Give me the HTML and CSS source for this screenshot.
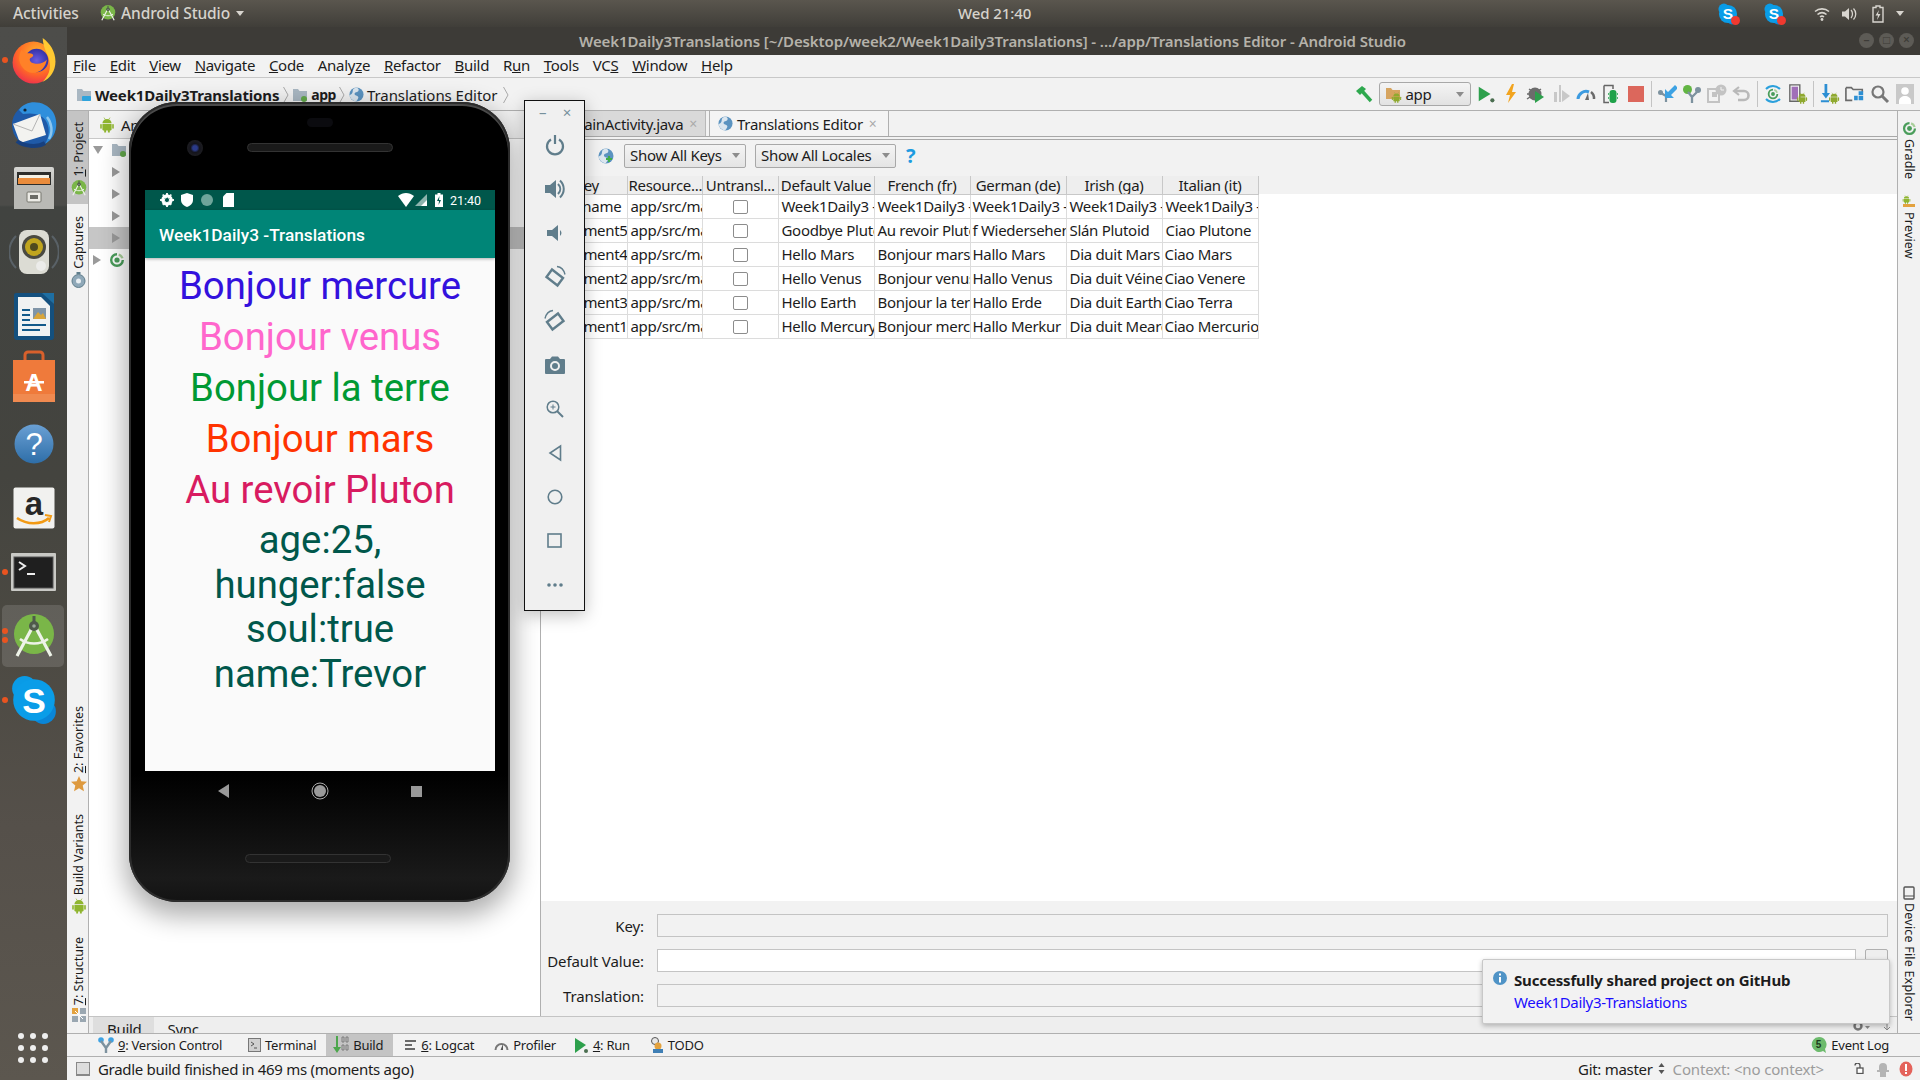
FILE: index.html
```html
<!DOCTYPE html>
<html lang="en">
<head>
<meta charset="utf-8">
<title>Android Studio</title>
<link rel="stylesheet" href="styles.css">
</head>
<body>
<svg class="defs" width="0" height="0" aria-hidden="true">
  <defs>
    <symbol id="droid" viewBox="0 0 16 16">
      <path d="M3.4 6.3a4.6 4.3 0 0 1 9.2 0z"/>
      <path d="M3.4 7h9.2v5.6a.8.8 0 0 1-.8.8h-1v2.2H8.9v-2.2H7.1v2.2H5.2v-2.2h-1a.8.8 0 0 1-.8-.8z"/>
      <rect x="1.2" y="7" width="1.6" height="4.8" rx=".8"/>
      <rect x="13.2" y="7" width="1.6" height="4.8" rx=".8"/>
      <path d="M5 .6l1.3 2M11 .6L9.7 2.6" stroke="currentColor" stroke-width=".7"/>
    </symbol>
    <symbol id="skype" viewBox="0 0 44 48">
      <circle cx="13" cy="13" r="12" fill="#0a9be6"/>
      <circle cx="31" cy="35" r="12" fill="#0a86d8"/>
      <circle cx="22" cy="24" r="20" fill="#0a9de8"/>
      <text x="22" y="36" text-anchor="middle" font-family="Liberation Sans" font-weight="700" font-size="34" fill="#fff">S</text>
    </symbol>
    <symbol id="globe" viewBox="0 0 16 16">
      <circle cx="8" cy="8" r="7.5" fill="#5b93c0"/>
      <path d="M8 .6c2 1 3 2 2 3.6S6.500 5 6 7s2 2 3.500 3-1 4.500-2 5.300C4 15 1 12 .6 8.500 3 8 4 6 4 4s2-3 4-3.400z" fill="#dbe6ef"/>
    </symbol>
    <symbol id="gradle" viewBox="0 0 16 16">
      <path d="M8 1a7 7 0 1 0 7 7h-2.400A4.600 4.600 0 1 1 8 3.400z" fill="#4a9d5b"/>
      <circle cx="8" cy="8" r="2.600" fill="#4a9d5b"/>
      <path d="M10 1.400a7 7 0 0 1 4.600 4.600l-2.300.6a4.600 4.600 0 0 0-2.900-2.900z" fill="#a8cf9a"/>
    </symbol>
    <symbol id="chev" viewBox="0 0 8 18">
      <path d="M1.500 1L6 9l-4.500 8" fill="none" stroke="#aaa" stroke-width="1"/>
    </symbol>
    <symbol id="asicon" viewBox="0 0 44 44">
      <circle cx="22" cy="20" r="20" fill="#7ab648"/>
      <path d="M5 42L20 14M39 42L24 14" stroke="#eef3e8" stroke-width="3.200" fill="none"/>
      <path d="M8 25c8 6 20 6 28 0" stroke="#eef3e8" stroke-width="2.600" fill="none"/>
      <circle cx="22" cy="12" r="5" fill="#4f5a4b"/>
      <rect x="20.500" y="2" width="3" height="6" fill="#4f5a4b"/>
      <circle cx="22" cy="12" r="1.800" fill="#9aa89a"/>
    </symbol>
  </defs>
</svg>

<header class="topbar">
  <div class="tb-left">
    <span class="tb-activities">Activities</span>
    <svg class="tb-as" width="16" height="18"><use href="#asicon"/></svg>
    <span>Android Studio</span>
    <i class="caret caret-light"></i>
  </div>
  <div class="tb-clock">Wed 21:40</div>
  <div class="tb-right">
    <span class="tray-skype"><svg width="20" height="22"><use href="#skype"/></svg><i class="tray-dot"></i></span>
    <span class="tray-skype tray-skype-2"><svg width="20" height="22"><use href="#skype"/></svg><i class="tray-dot"></i></span>
    <svg class="tray-wifi" width="16" height="16" viewBox="0 0 16 16" fill="none" stroke="#d8d5cf" stroke-width="1.600"><path d="M1 5.500c4-3.500 10-3.500 14 0M3.500 8.500c2.700-2.300 6.300-2.300 9 0M6 11c1.200-1 2.800-1 4 0"/><circle cx="8" cy="13.500" r="1.400" fill="#d8d5cf" stroke="none"/></svg>
    <svg class="tray-vol" width="16" height="16" viewBox="0 0 16 16"><path d="M1 5.500h3L8 2v12l-4-3.500H1z" fill="#d8d5cf"/><path d="M10 4c2 2 2 6 0 8M12.500 2.500c3 3 3 8 0 11" stroke="#d8d5cf" stroke-width="1.300" fill="none"/></svg>
    <svg class="tray-bat" width="12" height="18" viewBox="0 0 12 18"><path d="M4 1h4v1.500h3V17H1V2.500h3z" fill="none" stroke="#d8d5cf" stroke-width="1.400"/><path d="M7 5L3.500 10.500H6L5 15l3.500-6H6z" fill="#d8d5cf"/></svg>
    <i class="caret caret-light tray-caret"></i>
  </div>
</header>

<div class="desk">
  <nav class="dock">
    <div class="dock-item"><i class="dock-dot"></i>
      <svg width="45" height="47" viewBox="0 0 44 46">
        <defs>
          <radialGradient id="ff1" cx=".6" cy=".3" r=".85"><stop offset="0" stop-color="#ffb62e"/><stop offset=".55" stop-color="#ff6a25"/><stop offset="1" stop-color="#e8195e"/></radialGradient>
          <radialGradient id="ff2" cx=".5" cy=".5" r=".6"><stop offset="0" stop-color="#6a5be0"/><stop offset="1" stop-color="#2a2a9c"/></radialGradient>
        </defs>
        <circle cx="22" cy="25" r="20.500" fill="url(#ff1)"/>
        <path d="M31 1c7 5 12.500 13 12.500 23 0 9-5 17-13 20 6-5 9-13 7-21-1-6-6-11-6.500-22z" fill="#ffc932"/>
        <circle cx="25" cy="23" r="11.500" fill="url(#ff2)"/>
        <path d="M10 13c3 1 4 3 8 3 4 0 5 3 2 4-3 1-2 5 3 6 5 1 10-1 12-4-1 8-7 14-15 13-7-1-12-8-12-14 0-3 1-6 2-8z" fill="#ff8128"/>
      </svg>
    </div>
    <div class="dock-item">
      <svg width="48" height="50" viewBox="0 0 48 50">
        <circle cx="24" cy="26" r="22" fill="#1f5aa8"/>
        <path d="M9 11C16 0 35 1 43 13c6 10 4 25-8 32 4-6 5-14 2-21C34 16 24 13 13 15z" fill="#2f8fdc"/>
        <path d="M37 18c5 6 6 15 2 22" stroke="#8cc6ee" stroke-width="2.500" fill="none"/>
        <path d="M3 25l27-10 6 21-26 8z" fill="#f3f3f0"/>
        <path d="M3 25l19 7 8-17" fill="none" stroke="#b4b4b4" stroke-width="1"/>
        <circle cx="15" cy="11" r="1.600" fill="#123"/>
        <path d="M7 42c6 5 20 7 28 2" stroke="#17407f" stroke-width="4" fill="none"/>
      </svg>
    </div>
    <div class="dock-item">
      <svg width="42" height="44" viewBox="0 0 42 44">
        <defs><linearGradient id="cab" x1="0" y1="0" x2="0" y2="1"><stop offset="0" stop-color="#d7d7d4"/><stop offset="1" stop-color="#9c9c98"/></linearGradient></defs>
        <rect x="1" y="1" width="40" height="42" rx="2" fill="url(#cab)"/>
        <rect x="4" y="6" width="34" height="13" fill="#2d2d2b"/>
        <rect x="6" y="9" width="30" height="3" fill="#f4f0e4"/>
        <rect x="5" y="12" width="32" height="6" fill="#ea8c3c"/>
        <rect x="1" y="19" width="40" height="24" fill="#b9b9b5"/>
        <rect x="14" y="26" width="14" height="10" rx="1" fill="#ecebe6" stroke="#77776f"/>
        <rect x="17" y="29" width="8" height="4" fill="#6b6b66"/>
      </svg>
    </div>
    <div class="dock-item">
      <svg width="50" height="44" viewBox="0 0 50 44">
        <path d="M7 6c-9 9-9 23 0 32M43 6c9 9 9 23 0 32" stroke="#6d7a87" stroke-width="2" fill="none" opacity=".55"/>
        <rect x="10" y="0" width="30" height="44" rx="8" fill="#dcdcd4"/>
        <circle cx="25" cy="17" r="12" fill="#4a4a42"/>
        <circle cx="25" cy="17" r="9" fill="#c0a51e"/>
        <circle cx="25" cy="17" r="4" fill="#4f4a1e"/>
        <circle cx="32" cy="36" r="5" fill="#ececea"/>
      </svg>
    </div>
    <div class="dock-item">
      <svg width="40" height="47" viewBox="0 0 40 47">
        <path d="M2 0h27l11 11v33a3 3 0 0 1-3 3H3a3 3 0 0 1-3-3V2a2 2 0 0 1 2-2z" fill="#14507e"/>
        <path d="M28 0h12v11z" fill="#1e6fa3"/>
        <path d="M4 4h23l9 9v30H4z" fill="#f0f2f2"/>
        <path d="M8 16h8v2H8zM8 21h8v2H8zM8 26h8v2H8zM8 31h24v2H8zM8 36h18v2H8z" fill="#135a8a"/>
        <rect x="19" y="15" width="13" height="11" fill="#7f95a8"/>
        <path d="M19 26l5-7 3 3 2-2 3 6z" fill="#d9a63a"/>
      </svg>
    </div>
    <div class="dock-item dock-store">
      <svg width="42" height="52" viewBox="0 0 42 52">
        <path d="M12 11V5a3 3 0 0 1 3-3h12a3 3 0 0 1 3 3v6" fill="none" stroke="#d8602c" stroke-width="3"/>
        <path d="M0 10h42v42H0z" fill="#ef7a3b"/>
        <rect y="44" width="42" height="8" fill="#f08a50"/>
        <text x="21" y="41" text-anchor="middle" font-family="Liberation Sans" font-weight="700" font-size="24" fill="#fff">A</text>
        <rect x="11" y="31" width="20" height="2.500" fill="#fff"/>
      </svg>
    </div>
    <div class="dock-item">
      <svg width="40" height="40" viewBox="0 0 40 40">
        <defs><linearGradient id="hlp" x1="0" y1="0" x2="0" y2="1"><stop offset="0" stop-color="#6aa0d4"/><stop offset="1" stop-color="#2e6ea8"/></linearGradient></defs>
        <circle cx="20" cy="20" r="19.500" fill="url(#hlp)"/>
        <text x="20" y="31" text-anchor="middle" font-family="Liberation Sans" font-size="31" fill="#fff">?</text>
      </svg>
    </div>
    <div class="dock-item">
      <svg width="42" height="42" viewBox="0 0 42 42">
        <rect x=".5" y=".5" width="41" height="41" rx="2" fill="#f1f1ef"/>
        <text x="21" y="28" text-anchor="middle" font-family="Liberation Sans" font-weight="700" font-size="33" fill="#272727">a</text>
        <path d="M4 31c10 7 24 7 32 0" stroke="#f29a14" stroke-width="2.600" fill="none"/>
        <path d="M32 28l6 1-2 6" fill="none" stroke="#f29a14" stroke-width="2"/>
      </svg>
    </div>
    <div class="dock-item"><i class="dock-dot"></i>
      <svg width="45" height="38" viewBox="0 0 45 38">
        <rect width="45" height="38" rx="1" fill="#c9c9c5"/>
        <rect x="3" y="4" width="39" height="31" fill="#1f1f1f" stroke="#555"/>
        <path d="M8 9l6 4-6 4" fill="none" stroke="#eee" stroke-width="2"/>
        <rect x="16" y="20" width="8" height="2" fill="#eee"/>
      </svg>
    </div>
    <div class="dock-item dock-active"><i class="dock-dot dock-dot-a"></i><i class="dock-dot dock-dot-b"></i>
      <svg width="44" height="44"><use href="#asicon"/></svg>
    </div>
    <div class="dock-item"><i class="dock-dot"></i>
      <svg width="46" height="50"><use href="#skype"/></svg>
    </div>
    <div class="dock-apps">
      <i></i><i></i><i></i><i></i><i></i><i></i><i></i><i></i><i></i>
    </div>
  </nav>

  <main class="win">
    <div class="title">
      <span class="title-text">Week1Daily3Translations [~/Desktop/week2/Week1Daily3Translations] - .../app/Translations Editor - Android Studio</span>
      <div class="title-btns"><i>–</i><i>□</i><i>×</i></div>
    </div>

    <div class="menu">
      <span><u>F</u>ile</span><span><u>E</u>dit</span><span><u>V</u>iew</span><span><u>N</u>avigate</span><span><u>C</u>ode</span><span>Analy<u>z</u>e</span><span><u>R</u>efactor</span><span><u>B</u>uild</span><span>R<u>u</u>n</span><span><u>T</u>ools</span><span>VC<u>S</u></span><span><u>W</u>indow</span><span><u>H</u>elp</span>
    </div>

    <div class="navbar">
      <div class="crumbs">
        <svg class="c-ico" width="16" height="16" viewBox="0 0 16 16"><path d="M1 2h5l1.500 2H15v10H1z" fill="#a9b7c2"/><rect x="6" y="9" width="9" height="5" rx="1" fill="#2fa3dc"/></svg>
        <b>Week1Daily3Translations</b>
        <svg class="c-chev c-chev-1" width="8" height="18"><use href="#chev"/></svg>
        <svg class="c-ico" width="16" height="16" viewBox="0 0 16 16"><path d="M1 2h5l1.500 2H15v10H1z" fill="#a9b7c2"/><circle cx="12" cy="12" r="3" fill="#62a84a"/></svg>
        <b class="c-app">app</b>
        <svg class="c-chev c-chev-2" width="8" height="18"><use href="#chev"/></svg>
        <svg class="c-ico" width="15" height="15"><use href="#globe"/></svg>
        <span class="c-te">Translations Editor</span>
        <svg class="c-chev" width="8" height="18"><use href="#chev"/></svg>
      </div>
      <div class="tools">
        <svg class="t" width="20" height="20" viewBox="0 0 20 20"><path d="M8 7l9 10" stroke="#2ea84e" stroke-width="3.400"/><path d="M2 7l6-5 4 3-6 6z" fill="#2ea84e"/></svg>
        <div class="runcombo">
          <svg width="18" height="18" viewBox="0 0 18 18"><path d="M1 3h5l1.500 2H15v9H1z" fill="#d6a45f"/><g color="#8fa92e" fill="#8fa92e"><use href="#droid" x="6" y="7" width="11" height="11"/></g></svg>
          <span>app</span><i class="caret caret-dark"></i>
        </div>
        <svg class="t t-run" width="22" height="20" viewBox="0 0 22 20"><path d="M3 2l13 8-13 8z" fill="#2da04c"/><circle cx="18" cy="17" r="2.300" fill="#4b6e50"/></svg>
        <svg class="t" width="20" height="20" viewBox="0 0 20 20"><path d="M11 0L5 11h4l-2 8 8-11h-4l2-8z" fill="#f2a41f"/></svg>
        <svg class="t" width="20" height="20" viewBox="0 0 20 20"><path d="M3 5l3 2M15 5l-3 2M1 10h3M1 15l3-2" stroke="#6c6c6c" stroke-width="1.500"/><circle cx="9" cy="10" r="6.500" fill="#6c6c6c"/><path d="M9 7l9 6-9 6z" fill="#2da04c"/></svg>
        <svg class="t" width="20" height="20" viewBox="0 0 20 20"><path d="M3 8h3v10H3zM8 1h2v17H8z" fill="#c8c8c8"/><path d="M11 6l8 6-8 6z" fill="#c8c8c8"/></svg>
        <svg class="t" width="20" height="20" viewBox="0 0 20 20"><path d="M2 15a8 8 0 0 1 11-7" stroke="#3d9be0" stroke-width="3" fill="none"/><path d="M15 8a8 8 0 0 1 3 7" stroke="#6a6a6a" stroke-width="2.500" fill="none"/><path d="M9 16l3-7 1 7z" fill="#6a6a6a"/></svg>
        <svg class="t" width="20" height="20" viewBox="0 0 20 20"><path d="M3 1.500h9V5M8 18.500H3v-17" fill="none" stroke="#666" stroke-width="1.500"/><path d="M7 10h1M7 14h1M16 10h1M16 14h1" stroke="#1fa24a" stroke-width="1.300"/><rect x="8.500" y="6" width="7" height="13" rx="3" fill="#1fa24a"/></svg>
        <svg class="t" width="20" height="20" viewBox="0 0 20 20"><rect x="2" y="2" width="16" height="16" fill="#dc675c"/></svg>
        <i class="t-sep"></i>
        <svg class="t" width="20" height="20" viewBox="0 0 20 20"><circle cx="3.500" cy="8.500" r="2.500" fill="#7d929f"/><path d="M4 9l5 3v6" stroke="#7d929f" stroke-width="2.200" fill="none"/><path d="M18 1L11 8l-3-3v9h9l-3-3 7-7z" fill="#3da2e3"/></svg>
        <svg class="t" width="20" height="20" viewBox="0 0 20 20"><circle cx="5.500" cy="5.500" r="4.500" fill="#62b543"/><circle cx="16" cy="6" r="3" fill="#7d929f"/><path d="M6 8l4 5v6M15 8l-5 5" stroke="#7d929f" stroke-width="2.300" fill="none"/></svg>
        <svg class="t" width="20" height="20" viewBox="0 0 20 20"><path d="M1 5h11v13H1z" fill="none" stroke="#c3c3c3" stroke-width="2"/><rect x="5" y="8" width="5" height="5" fill="#c3c3c3"/><circle cx="14" cy="6" r="5.500" fill="#c3c3c3"/><path d="M14 3v3h3" stroke="#f2f2f2" fill="none"/></svg>
        <svg class="t" width="20" height="20" viewBox="0 0 20 20"><path d="M7 3L2 7l5 4" fill="none" stroke="#b9b9b9" stroke-width="2.200"/><path d="M3 7h9a4.500 4.500 0 0 1 0 9H6" fill="none" stroke="#b9b9b9" stroke-width="2.600"/></svg>
        <i class="t-sep"></i>
        <svg class="t" width="20" height="20" viewBox="0 0 20 20"><path d="M3 5c4-4 10-4 14 0M3 15c4 4 10 4 14 0" stroke="#2ba0dc" stroke-width="2" fill="none"/><use href="#gradle" x="4" y="4" width="12" height="12"/></svg>
        <svg class="t" width="22" height="22" viewBox="0 0 22 22"><path d="M2 1h11v18H2z" fill="none" stroke="#666" stroke-width="1.500"/><rect x="4" y="3" width="7" height="14" fill="#a06fb8"/><g fill="#8fa92e" color="#8fa92e"><use href="#droid" x="9" y="9" width="13" height="13"/></g></svg>
        <i class="t-sep"></i>
        <svg class="t" width="22" height="22" viewBox="0 0 22 22"><path d="M5 0h3v10h3l-4.500 6L2 10h3zM1 18h9v2H1z" fill="#2d8fd3"/><g fill="#8fa92e" color="#8fa92e"><use href="#droid" x="9" y="9" width="13" height="13"/></g></svg>
        <svg class="t" width="22" height="20" viewBox="0 0 22 20"><path d="M1 3h6l2 2h10v3M8 17H1V3" fill="none" stroke="#6a6a6a" stroke-width="1.800"/><path d="M15 7h5v4h-5zM10 12h4v5h-4zM15 12h5v5h-5z" fill="#2d8fd3"/></svg>
        <svg class="t" width="20" height="20" viewBox="0 0 20 20"><circle cx="8" cy="8" r="5.500" fill="none" stroke="#777" stroke-width="2.200"/><path d="M12 12l6 6" stroke="#777" stroke-width="3"/></svg>
        <svg class="t" width="18" height="20" viewBox="0 0 18 20"><rect width="18" height="20" fill="#c9c9c9"/><circle cx="9" cy="7" r="3.800" fill="#fff"/><path d="M3 20v-3c0-3 3-5 6-5s6 2 6 5v3z" fill="#fff"/></svg>
      </div>
    </div>

    <div class="mid">
      <aside class="lstrip">
        <div class="sb sb-active sb-project"><span class="vt"><u>1</u>: Project</span><svg width="16" height="16"><use href="#asicon"/></svg></div>
        <div class="sb sb-captures"><span class="vt">Captures</span>
          <svg width="15" height="16" viewBox="0 0 15 16"><circle cx="7.500" cy="9" r="6.500" fill="#8fa8b8" stroke="#5f7d8b"/><circle cx="7.500" cy="9" r="2.500" fill="#e8eef2"/><rect x="5.500" y="0" width="4" height="2" fill="#5f7d8b"/></svg></div>
        <div class="sb sb-fav"><span class="vt"><u>2</u>: Favorites</span>
          <svg width="16" height="16" viewBox="0 0 16 16"><path d="M8 0l2.300 5.300 5.700.5-4.300 3.800 1.300 5.600L8 12.300l-5 2.900 1.300-5.600L0 5.800l5.700-.5z" fill="#de9a3f"/></svg></div>
        <div class="sb sb-variants"><span class="vt">Build Variants</span><svg class="sb-droid" width="16" height="16" fill="#8fb52f" color="#8fb52f"><use href="#droid"/></svg></div>
        <div class="sb sb-struct"><span class="vt"><u>7</u>: Structure</span>
          <svg width="14" height="14" viewBox="0 0 14 14"><rect width="6" height="6" fill="#e3a23f"/><rect x="8" width="6" height="6" fill="#9aa7b1"/><rect y="8" width="6" height="6" fill="#9aa7b1"/><rect x="8" y="8" width="6" height="6" fill="#9aa7b1"/><path d="M3 3l8 8" stroke="#fff"/></svg></div>
      </aside>

      <div class="work">
        <div class="panes">
          <section class="project">
            <div class="proj-head">
              <svg width="16" height="16" fill="#8fb52f" color="#8fb52f"><use href="#droid"/></svg>
              <span>Android</span>
              <i class="caret caret-dark proj-caret"></i>
              <i class="proj-split"></i>
            </div>
            <div class="tree">
              <div class="row r0"><i class="arrow-down"></i><svg width="16" height="16" viewBox="0 0 16 16"><path d="M1 2h5l1.500 2H15v10H1z" fill="#a9b7c2"/><circle cx="12" cy="12" r="3" fill="#62a84a"/></svg></div>
              <div class="row r1"><i class="arrow-right"></i></div>
              <div class="row r1"><i class="arrow-right"></i></div>
              <div class="row r1"><i class="arrow-right"></i></div>
              <div class="row r1 row-sel"><i class="arrow-right"></i></div>
              <div class="row r0"><i class="arrow-right"></i><svg width="16" height="16"><use href="#gradle"/></svg></div>
            </div>
          </section>

          <section class="editor">
            <div class="tabs">
              <div class="tab"><span>MainActivity.java</span><em>×</em></div>
              <div class="tab tab-on"><svg width="15" height="15"><use href="#globe"/></svg><span>Translations Editor</span><em>×</em></div>
            </div>
            <div class="te-bar">
              <svg class="te-globe" width="16" height="16" viewBox="0 0 16 16"><use href="#globe"/><path d="M11 8v6M8 11h6" stroke="#3fae49" stroke-width="2"/></svg>
              <div class="combo combo-keys"><span>Show All Keys</span><i class="caret caret-dark"></i></div>
              <div class="combo combo-locales"><span>Show All Locales</span><i class="caret caret-dark"></i></div>
              <span class="te-help">?</span>
            </div>
            <div class="te-table">
              <table>
                <colgroup><col class="c-key"><col class="c-res"><col class="c-res"><col class="c-val"><col class="c-val"><col class="c-val"><col class="c-val"><col class="c-val"></colgroup>
                <thead><tr><th>Key</th><th>Resource...</th><th>Untransl...</th><th>Default Value</th><th>French (fr)</th><th>German (de)</th><th>Irish (ga)</th><th>Italian (it)</th></tr></thead>
                <tbody>
                  <tr><td class="k">app_name</td><td>app/src/main</td><td><i class="check"></i></td><td>Week1Daily3 -Translations</td><td>Week1Daily3 -Translations</td><td class="tight">Week1Daily3 -Translations</td><td>Week1Daily3 -Translations</td><td>Week1Daily3 -Translations</td></tr>
                  <tr><td class="k">statement5</td><td>app/src/main</td><td><i class="check"></i></td><td>Goodbye Pluto</td><td>Au revoir Pluton</td><td class="tight">f Wiedersehen</td><td>Slán Plutoid</td><td>Ciao Plutone</td></tr>
                  <tr><td class="k">statement4</td><td>app/src/main</td><td><i class="check"></i></td><td>Hello Mars</td><td>Bonjour mars</td><td class="tight">Hallo Mars</td><td>Dia duit Mars</td><td class="tight">Ciao Mars</td></tr>
                  <tr><td class="k">statement2</td><td>app/src/main</td><td><i class="check"></i></td><td>Hello Venus</td><td>Bonjour venus</td><td class="tight">Hallo Venus</td><td>Dia duit Véineas</td><td class="tight">Ciao Venere</td></tr>
                  <tr><td class="k">statement3</td><td>app/src/main</td><td><i class="check"></i></td><td>Hello Earth</td><td>Bonjour la terre</td><td class="tight">Hallo Erde</td><td>Dia duit Earth</td><td class="tight">Ciao Terra</td></tr>
                  <tr><td class="k">statement1</td><td>app/src/main</td><td><i class="check"></i></td><td>Hello Mercury</td><td>Bonjour mercure</td><td class="tight">Hallo Merkur</td><td>Dia duit Mearcair</td><td class="tight">Ciao Mercurio</td></tr>
                </tbody>
              </table>
            </div>
            <div class="te-fill"></div>
            <div class="te-detail">
              <label>Key:</label><div class="field field-off"></div>
              <label>Default Value:</label><div class="field-wrap"><div class="field field-on"></div><div class="field-btn"></div></div>
              <label>Translation:</label><div class="field field-off"></div>
            </div>
          </section>
        </div>
        <div class="buildtabs">
          <span class="bt bt-on">Build</span><span class="bt">Sync</span>
          <svg class="bt-gear" width="24" height="12" viewBox="0 0 24 12"><circle cx="6" cy="6" r="3.500" fill="none" stroke="#777" stroke-width="2.400"/><path d="M13 6h5l-2.500 3z" fill="#888"/></svg>
          <svg class="bt-pin" width="10" height="12" viewBox="0 0 10 12"><path d="M5 1v9M2 7l3 3 3-3" fill="none" stroke="#888"/></svg>
        </div>
      </div>

      <aside class="rstrip">
        <div class="sbr sbr-gradle"><svg width="15" height="15"><use href="#gradle"/></svg><span class="vr">Gradle</span></div>
        <div class="sbr sbr-preview"><svg width="14" height="14" viewBox="0 0 14 14"><g fill="#8fb52f" color="#8fb52f"><use href="#droid" width="9" height="9"/></g><rect x="1" y="9" width="12" height="3" fill="#e3a23f"/></svg><span class="vr">Preview</span></div>
        <div class="sbr sbr-device"><svg width="12" height="14" viewBox="0 0 12 14"><rect x="1" y="1" width="10" height="12" rx="1" fill="none" stroke="#555" stroke-width="1.400"/><path d="M1 10h10" stroke="#555"/></svg><span class="vr">Device File Explorer</span></div>
      </aside>
    </div>

    <div class="toolbtns">
      <div class="tbn tbn-vc"><svg width="16" height="18" viewBox="0 0 16 18"><circle cx="3" cy="4" r="2.800" fill="#3da2e3"/><circle cx="13" cy="4" r="2.800" fill="#3da2e3"/><path d="M3 5l5 7v5M13 5l-5 7" stroke="#7d929f" stroke-width="2.400" fill="none"/></svg><span><u>9</u>: Version Control</span></div>
      <div class="tbn tbn-term"><svg width="13" height="14" viewBox="0 0 13 14"><rect x=".5" y=".5" width="12" height="13" fill="#d0d0d0" stroke="#777"/><path d="M3 4l3 2-3 2M6 10h3" stroke="#555" fill="none"/></svg><span>Terminal</span></div>
      <div class="tbn tbn-on tbn-build"><svg width="18" height="18" viewBox="0 0 18 18"><path d="M5 0h2v11h3l-4 6-4-6h3z" fill="#4ca64c"/><path d="M11 1h2v5h-2zM15 1h2v5h-2zM11 9h2v5h-2zM15 9h2v5h-2z" fill="none" stroke="#777" stroke-width=".9"/></svg><span>Build</span></div>
      <div class="tbn tbn-logcat"><svg width="13" height="12" viewBox="0 0 13 12"><path d="M1 1h11v2H1zM1 5h7v2H1zM1 9h10v2H1z" fill="#6a6a6a"/></svg><span><u>6</u>: Logcat</span></div>
      <div class="tbn tbn-prof"><svg width="15" height="12" viewBox="0 0 15 12"><path d="M1.500 11a6 6 0 0 1 12 0" fill="none" stroke="#777" stroke-width="2"/><path d="M6.500 11L9 5v6z" fill="#555"/></svg><span>Profiler</span></div>
      <div class="tbn tbn-run"><svg width="15" height="17" viewBox="0 0 15 17"><path d="M1 1l11 7-11 8z" fill="#2da04c"/><circle cx="12" cy="14" r="2" fill="#4b6e50"/></svg><span><u>4</u>: Run</span></div>
      <div class="tbn tbn-todo"><svg width="15" height="16" viewBox="0 0 15 16"><circle cx="6" cy="4" r="3.500" fill="#e8e8e8" stroke="#555"/><circle cx="9" cy="9" r="3.500" fill="#e3a23f"/><rect x="4" y="12" width="10" height="4" fill="#3f7fb5"/></svg><span>TODO</span></div>
      <div class="tbn tbn-log"><svg width="16" height="16" viewBox="0 0 16 16"><path d="M8 0a7.500 7.500 0 1 0 4 14l3 2-1-4A7.500 7.500 0 0 0 8 0z" fill="#6dbb6d"/><text x="7.500" y="11" text-anchor="middle" font-family="Liberation Sans" font-size="10" font-weight="700" fill="#1d3d1d">5</text></svg><span>Event Log</span></div>
    </div>

    <footer class="status">
      <i class="st-box"></i>
      <span class="st-msg">Gradle build finished in 469 ms (moments ago)</span>
      <span class="st-git">Git: master</span>
      <svg class="st-up" width="7" height="11" viewBox="0 0 7 11"><path d="M3.500 0l3 4h-6zM3.500 11l3-4h-6z" fill="#555"/></svg>
      <span class="st-ctx">Context: &lt;no context&gt;</span>
      <svg class="st-lock" width="10" height="11" viewBox="0 0 10 11"><path d="M1 2.500a2.500 2.500 0 0 1 5 0V5" fill="none" stroke="#555" stroke-width="1.300"/><rect x="3" y="5" width="6" height="5.500" fill="#fff" stroke="#555" stroke-width="1.300"/></svg>
      <svg class="st-head" width="12" height="16" viewBox="0 0 12 16"><path d="M2 6a4 4 0 0 1 8 0v3H2zM0 9h12v2H0zM3 11h6v5H3z" fill="#b4b4b4"/></svg>
      <svg class="st-err" width="14" height="16" viewBox="0 0 14 16"><ellipse cx="7" cy="8" rx="6.500" ry="7.500" fill="#e4635b"/><path d="M6 3h2v7H6zM6 11h2v2H6z" fill="#fff"/></svg>
    </footer>
  </main>
</div>

<section class="phone">
  <i class="ph-sensor"></i><i class="ph-speaker ph-speaker-top"></i><i class="ph-camera"></i>
  <div class="screen">
    <div class="a-status">
      <svg width="14" height="14" viewBox="0 0 14 14"><circle cx="7" cy="7" r="4.200" fill="none" stroke="#fff" stroke-width="3"/><path d="M6 0h2v14H6zM0 6h14v2H0zM2 2l1.500-1L12 11l-1.500 1.500zM12 2l-1.500-1L2 11l1.500 1.500z" fill="#fff" opacity=".9"/><circle cx="7" cy="7" r="2" fill="#00574b"/></svg>
      <svg class="a-sh" width="12" height="14" viewBox="0 0 12 14"><path d="M6 0l6 2v5c0 3.500-3 6-6 7-3-1-6-3.500-6-7V2z" fill="#fff"/></svg>
      <i class="a-circle"></i>
      <svg class="a-sd" width="11" height="14" viewBox="0 0 11 14"><path d="M3.500 0H11v14H0V3.500z" fill="#fff"/></svg>
      <svg class="a-wifi" width="16" height="14" viewBox="0 0 16 14"><path d="M0 3c5-4 11-4 16 0l-8 11z" fill="#fff"/></svg>
      <svg class="a-sig" width="12" height="12" viewBox="0 0 12 12"><path d="M12 0v12H0z" fill="#fff" opacity=".55"/><path d="M12 6v6H6z" fill="#fff"/></svg>
      <svg class="a-bat" width="8" height="14" viewBox="0 0 8 14"><path d="M2.500 0h3v1.500H8V14H0V1.500h2.500z" fill="#fff"/><path d="M4.500 3L2 8h2l-.5 4L6 7H4z" fill="#00574b"/></svg>
      <span class="a-time">21:40</span>
    </div>
    <div class="a-bar">Week1Daily3 -Translations</div>
    <div class="a-body">
      <p class="c-blue">Bonjour mercure</p>
      <p class="c-pink">Bonjour venus</p>
      <p class="c-green">Bonjour la terre</p>
      <p class="c-orange">Bonjour mars</p>
      <p class="c-crimson">Au revoir Pluton</p>
      <p class="c-teal">age:25,<br>hunger:false<br>soul:true<br>name:Trevor</p>
    </div>
  </div>
  <div class="a-nav">
    <svg width="11" height="14" viewBox="0 0 11 14"><path d="M11 0v14L0 7z" fill="#999"/></svg>
    <svg width="18" height="18" viewBox="0 0 18 18"><circle cx="9" cy="9" r="8" fill="none" stroke="#aaa"/><circle cx="9" cy="9" r="6" fill="#999"/></svg>
    <i class="a-sq"></i>
  </div>
  <i class="ph-speaker ph-speaker-bot"></i>
</section>

<aside class="emu">
  <div class="emu-head"><span>–</span><span>×</span></div>
  <div class="emu-i"><svg width="20" height="22" viewBox="0 0 20 22"><path d="M6 5.500a8 8 0 1 0 8 0" fill="none" stroke="#607d8b" stroke-width="2.200"/><path d="M10 1v9" stroke="#607d8b" stroke-width="2.200"/></svg></div>
  <div class="emu-i"><svg width="20" height="22" viewBox="0 0 20 22"><path d="M0 7h5l6-5v18l-6-5H0z" fill="#607d8b"/><path d="M13 6c3 3 3 7 0 10M15 2.500c5 5 5 12 0 17" fill="none" stroke="#607d8b" stroke-width="2"/></svg></div>
  <div class="emu-i"><svg width="16" height="18" viewBox="0 0 16 18"><path d="M0 6h5l6-5v16l-6-5H0z" fill="#607d8b"/><path d="M13 6c2 2 2 4 0 6z" fill="#607d8b"/></svg></div>
  <div class="emu-i"><svg width="24" height="24" viewBox="0 0 24 24"><path d="M9 4.500L20 13l-5.500 7.500L3.500 12z" fill="none" stroke="#607d8b" stroke-width="2.400"/><path d="M14 1.500c4 .5 7 3.500 8 8" fill="none" stroke="#607d8b" stroke-width="1.400"/></svg></div>
  <div class="emu-i"><svg width="24" height="24" viewBox="0 0 24 24"><path d="M15 4.500L4 13l5.500 7.500L20.500 12z" fill="none" stroke="#607d8b" stroke-width="2.400"/><path d="M10 1.500c-4 .5-7 3.500-8 8" fill="none" stroke="#607d8b" stroke-width="1.400"/></svg></div>
  <div class="emu-i"><svg width="20" height="18" viewBox="0 0 20 18"><path d="M1 3h4l2-2.500h6L15 3h4a1 1 0 0 1 1 1v13a1 1 0 0 1-1 1H1a1 1 0 0 1-1-1V4a1 1 0 0 1 1-1z" fill="#607d8b"/><circle cx="10" cy="10" r="4" fill="none" stroke="#f0f0f0" stroke-width="2"/></svg></div>
  <div class="emu-i"><svg width="18" height="18" viewBox="0 0 18 18"><circle cx="7" cy="7" r="5.800" fill="none" stroke="#607d8b" stroke-width="1.500"/><path d="M11 11l6 6" stroke="#607d8b" stroke-width="2"/><path d="M7 4.500v5M4.500 7h5" stroke="#607d8b"/></svg></div>
  <div class="emu-i"><svg width="14" height="18" viewBox="0 0 14 18"><path d="M12.500 2v14L2 9z" fill="none" stroke="#607d8b" stroke-width="1.600"/></svg></div>
  <div class="emu-i"><svg width="16" height="16" viewBox="0 0 16 16"><circle cx="8" cy="8" r="6.800" fill="none" stroke="#607d8b" stroke-width="1.600"/></svg></div>
  <div class="emu-i"><svg width="15" height="15" viewBox="0 0 15 15"><rect x="1" y="1" width="13" height="13" fill="none" stroke="#607d8b" stroke-width="1.600"/></svg></div>
  <div class="emu-i"><svg width="16" height="4" viewBox="0 0 16 4"><circle cx="2" cy="2" r="1.800" fill="#607d8b"/><circle cx="8" cy="2" r="1.800" fill="#607d8b"/><circle cx="14" cy="2" r="1.800" fill="#607d8b"/></svg></div>
</aside>

<aside class="toast">
  <svg width="14" height="14" viewBox="0 0 14 14"><circle cx="7" cy="7" r="7" fill="#4f93c6"/><path d="M6 2.500h2v2H6zM6 6h2v5.500H6z" fill="#fff"/></svg>
  <div class="toast-txt">
    <strong>Successfully shared project on GitHub</strong>
    <a>Week1Daily3-Translations</a>
  </div>
</aside>
</body>
</html>
```

FILE: styles.css
```css
* { box-sizing: border-box; }
html, body { margin: 0; padding: 0; }
body {
  position: relative;
  width: 1920px;
  height: 1080px;
  overflow: hidden;
  display: flex;
  flex-direction: column;
  font-family: "Noto Sans", "Liberation Sans", sans-serif;
  font-size: 15px;
  letter-spacing: -.3px;
  color: #1c1c1c;
  background: #f2f2f2;
}
i, em { font-style: normal; }
.defs { position: absolute; }
svg { display: block; flex: none; }
svg text { letter-spacing: 0; }

.caret { display: block; width: 0; height: 0; border-left: 4px solid transparent; border-right: 4px solid transparent; }
.caret-light { border-top: 5px solid #d8d5cf; }
.caret-dark { border-top: 5px solid #8c8c8c; }

/* gnome top bar */
.topbar {
  height: 27px;
  flex: none;
  display: grid;
  grid-template-columns: 958px auto 1fr;
  align-items: center;
  background: linear-gradient(#5a564e, #403e39);
  color: #d6d3cc;
  font-size: 15.5px;
  letter-spacing: -.1px;
  font-weight: 500;
}
.tb-left { display: flex; align-items: center; padding-left: 13px; padding-bottom: 1px; }
.tb-activities { width: 85px; }
.tb-left .tb-as { margin: 0 5px 0 2px; }
.tb-left .caret { margin-left: 6px; }
.tb-clock { font-size: 15px; padding-bottom: 1px; }
.tb-right { display: flex; align-items: center; justify-content: flex-end; padding-right: 16px; }
.tray-skype { position: relative; display: block; width: 20px; height: 22px; margin-right: 26px; }
.tray-dot { position: absolute; right: -2px; bottom: 0; width: 9px; height: 9px; border-radius: 50%; background: #f0392f; }
.tray-skype-2 { margin-right: 30px; }
.tray-vol { margin-left: 11px; }
.tray-bat { margin-left: 15px; }
.tray-caret { margin-left: 12px; }

/* desktop */
.desk { flex: 1; display: flex; min-height: 0; }
.dock {
  width: 67px;
  flex: none;
  display: flex;
  flex-direction: column;
  padding-top: 1px;
  background: linear-gradient(#4d4d4a 0, #4c4c49 178px, #414340 180px, #44443f 450px, #4b4942 600px, #55504a 800px, #5c574f 1053px);
}
.dock-item { position: relative; height: 64px; flex: none; display: flex; align-items: center; justify-content: center; }
.dock-store svg { margin-top: -9px; }
.dock-active::before { content: ""; position: absolute; left: 2px; top: 1px; right: 3px; bottom: 1px; border-radius: 5px; background: rgba(255,255,255,.13); }
.dock-active svg { position: relative; }
.dock-dot { position: absolute; left: 2px; top: 29px; width: 6px; height: 6px; border-radius: 50%; background: #e95420; }
.dock-dot-a { top: 24px; }
.dock-dot-b { top: 33px; }
.dock-apps { margin-top: auto; margin-bottom: 17px; margin-left: 18px; display: grid; grid-template-columns: repeat(3, 6px); gap: 6px; }
.dock-apps i { width: 6px; height: 6px; border-radius: 50%; background: #eeeeee; }

/* window */
.win { flex: 1; min-width: 0; display: flex; flex-direction: column; }
.title {
  height: 28px;
  flex: none;
  display: flex;
  align-items: center;
  padding: 0 0 1px 512px;
  background: #3d3b37;
  color: #b5b2aa;
  font-weight: 600;
  font-size: 15px;
  letter-spacing: -.1px;
}
.title-btns { margin-left: auto; display: flex; gap: 5px; padding-right: 6px; }
.title-btns i { width: 15px; height: 15px; border-radius: 50%; background: #5d5b56; color: #3d3b37; font-size: 12px; line-height: 14px; text-align: center; }

.menu { height: 23px; flex: none; display: flex; align-items: center; background: #f2f2f2; padding: 0 0 2px 6px; gap: 13.850px; border-bottom: 1px solid #c8c8c8; }
.navbar { height: 33px; flex: none; display: flex; align-items: center; justify-content: space-between; background: #f2f2f2; border-bottom: 1px solid #b0b0b0; }
.crumbs { display: flex; align-items: center; padding: 1px 0 0 9px; gap: 3px; }
.crumbs b { font-weight: 700; letter-spacing: -.15px; }
.crumbs .c-app { font-size: 14px; letter-spacing: -.5px; }
.c-te { letter-spacing: -.05px; }
.c-chev { margin: 0 2px; }
.c-chev-1 { margin: 0 -1px 0 0; }
.c-chev-2 { margin: 0 0 0 -1px; }
.tools { display: flex; align-items: center; padding-right: 3px; }
.tools .t { margin: 0 2.500px; }
.tools svg.t { width: 20px; height: 20px; }
.t-sep { width: 1px; height: 26px; margin: 0 2.600px; background: #c4c4c4; }
.runcombo {
  width: 92px; height: 24px; margin: 0 2px 0 3px;
  display: flex; align-items: center; padding: 0 6px 0 5px; gap: 2px;
  border: 1px solid #a8a8a8; border-radius: 3px;
  background: linear-gradient(#f4f4f4, #e2e2e2);
  font-size: 15px;
}
.runcombo .caret { margin-left: auto; }

.mid { flex: 1; min-height: 0; display: flex; }

/* strips */
.lstrip { width: 22px; flex: none; border-right: 1px solid #b0b0b0; display: flex; flex-direction: column; font-size: 12.500px; }
.sb { display: flex; flex-direction: column; align-items: center; gap: 3px; padding-left: 2px; }
.vt { writing-mode: vertical-rl; transform: rotate(180deg); white-space: nowrap; line-height: 19px; letter-spacing: 0; }
.sb-active { background: #c4c4c4; }
.sb-project { height: 93px; padding-top: 11px; }
.sb-captures { padding-top: 12px; }
.sb-fav { margin-top: auto; }
.sb-variants { margin-top: 22px; }
.sb-struct { margin-top: 23px; padding-bottom: 11px; }

.rstrip { width: 23px; flex: none; border-left: 1px solid #b0b0b0; display: flex; flex-direction: column; align-items: center; font-size: 12.500px; }
.sbr { display: flex; flex-direction: column; align-items: center; gap: 3px; }
.vr { writing-mode: vertical-rl; white-space: nowrap; line-height: 21px; letter-spacing: .2px; }
.sbr-gradle { padding-top: 10px; }
.sbr-preview { padding-top: 16px; }
.sbr-device { margin-top: auto; padding-bottom: 12px; }

.work { flex: 1; min-width: 0; display: flex; flex-direction: column; }
.panes { flex: 1; min-height: 0; display: flex; }

/* project panel */
.project { width: 452px; flex: none; background: #fff; border-right: 1px solid #b0b0b0; display: flex; flex-direction: column; }
.proj-head { height: 28px; flex: none; display: flex; align-items: center; padding-left: 10px; gap: 6px; background: #f2f2f2; border-bottom: 1px solid #c8c8c8; }
.proj-caret { margin-left: 380px; }
.proj-split { width: 8px; height: 14px; background: #8c8c8c; margin-left: 10px; }
.row { height: 22px; display: flex; align-items: center; }
.r0 { padding-left: 4px; }
.r1 { padding-left: 23px; }
.row svg { margin-left: 8px; }
.row-sel { background: #c6c6c6; }
.arrow-right { width: 0; height: 0; border-top: 5px solid transparent; border-bottom: 5px solid transparent; border-left: 8px solid #9a9a9a; }
.arrow-down { width: 0; height: 0; border-left: 5px solid transparent; border-right: 5px solid transparent; border-top: 8px solid #9a9a9a; }

/* editor */
.editor { flex: 1; min-width: 0; display: flex; flex-direction: column; background: #fff; }
.tabs { height: 29px; flex: none; display: flex; background: #f2f2f2; border-bottom: 4px double #a8a8a8; }
.tab { display: flex; align-items: center; justify-content: flex-end; gap: 4px; width: 165px; height: 25px; padding-right: 8px; background: #d9d9d9; border-right: 1px solid #b8b8b8; }
.tab em { color: #aaa; font-size: 14px; margin-left: 2px; }
.tab-on { width: 180px; margin-left: 3px; background: #f4f4f4; border-left: 1px solid #b0b0b0; border-right: 1px solid #b0b0b0; justify-content: flex-start; padding-left: 8px; }
.te-bar { height: 36px; flex: none; display: flex; align-items: center; padding-bottom: 5px; background: #f2f2f2; }
.te-globe { margin-left: 57px; }
.combo { height: 24px; display: flex; align-items: center; justify-content: space-between; padding: 0 5px 1px; border: 1px solid #a8a8a8; border-radius: 2px; background: linear-gradient(#f4f4f4, #e4e4e4); }
.combo-keys { width: 122px; margin-left: 10px; }
.combo-locales { width: 141px; margin-left: 9px; }
.te-help { margin-left: 10px; color: #1e9be0; font-weight: 700; font-size: 20px; }

.te-table { flex: none; background: linear-gradient(#f2f2f2 18px, #fff 18px); padding-left: 6px; }
table { border-collapse: collapse; table-layout: fixed; width: 711px; }
.c-key { width: 80px; }
col.c-res { width: 75.500px; }
.c-val { width: 96px; }
th, td { padding: 0 3px; overflow: hidden; white-space: nowrap; font-weight: 400; }
th { height: 18px; padding: 0 1px; vertical-align: bottom; text-align: center; background: #eeeeee; border-right: 1px solid #c8c8c8; border-bottom: 1px solid #c8c8c8; line-height: 17px; }
td { height: 24px; padding-left: 3px; border-right: 1px solid #dcdcdc; border-bottom: 1px solid #dcdcdc; background: #fff; }
td.tight { padding-left: 2px; }
.check { display: block; width: 15px; height: 14px; margin: 2px auto 0; background: #fff; border: 1px solid #8c8c8c; border-radius: 2px; }

.te-fill { flex: 1; }
.te-detail { flex: none; height: 115px; background: #f2f2f2; display: grid; grid-template-columns: 103px 1fr; grid-auto-rows: 23px; row-gap: 12px; padding: 13px 9px 0 0; align-items: center; }
.te-detail label { text-align: right; letter-spacing: -.1px; }
.field { height: 23px; margin-left: 13px; border: 1px solid #c4c4c4; }
.field-off { background: #f2f2f2; }
.field-on { flex: 1; background: #fff; }
.field-wrap { display: flex; gap: 9px; }
.field-btn { width: 23px; height: 23px; border: 1px solid #b0b0b0; border-radius: 2px; background: #eee; }

.buildtabs { height: 17px; flex: none; overflow: hidden; display: flex; align-items: flex-start; gap: 0; background: #eeeeee; border-top: 1px solid #c4c4c4; padding-left: 4px; position: relative; }
.bt { height: 17px; padding: 3px 12px 0 14px; line-height: 19px; }
.bt-on { background: #dedede; }
.bt-gear { margin-left: auto; margin-top: 3px; }
.bt-pin { margin: 3px 5px 0 6px; }

.toolbtns { height: 23px; flex: none; display: flex; align-items: center; border-top: 1px solid #b0b0b0; background: #f2f2f2; font-size: 13px; letter-spacing: -.25px; }
.tbn { height: 22px; display: flex; align-items: center; gap: 4px; }
.tbn-vc { margin-left: 31px; }
.tbn-term { margin-left: 26px; }
.tbn-on { background: #c4c4c4; padding: 0 10px 0 5px; }
.tbn-build { margin-left: 10px; }
.tbn-logcat { margin-left: 11px; }
.tbn-prof { margin-left: 20px; }
.tbn-run { margin-left: 18px; }
.tbn-todo { margin-left: 19px; }
.tbn-log { margin-left: auto; margin-right: 31px; }

.status { height: 24px; flex: none; display: flex; align-items: center; border-top: 1px solid #b0b0b0; background: #f2f2f2; padding-left: 9px; }
.st-box { width: 14px; height: 14px; background: #ddd; border: 1px solid #888; border-bottom-width: 2px; }
.st-msg { margin-left: 8px; }
.st-git { margin-left: auto; }
.st-up { margin-left: 5px; }
.st-ctx { margin-left: 8px; color: #9c9c9c; letter-spacing: -.15px; }
.st-lock { margin-left: 30px; }
.st-head { margin-left: 13px; }
.st-err { margin-left: 10px; margin-right: 7px; }

/* floating phone */
.phone {
  position: absolute;
  left: 129px;
  top: 102px;
  width: 381px;
  height: 800px;
  padding: 88px 15px 0 16px;
  border-radius: 48px;
  background: linear-gradient(#000 84%, #1a1a1a 97%, #131313);
  box-shadow: inset 0 0 0 2px #2c2c2c, inset 0 2px 0 2px #4a4a4a, 0 10px 26px 4px rgba(0,0,0,.32);
}
.ph-sensor { position: absolute; left: 178px; top: 16px; width: 26px; height: 9px; border-radius: 5px; background: #0b0b0f; }
.ph-camera { position: absolute; left: 58px; top: 38px; width: 16px; height: 16px; border-radius: 50%; background: radial-gradient(#2a3a88 0 20%, #14141c 40%, #262626); }
.ph-speaker { position: absolute; width: 146px; height: 9px; border-radius: 5px; background: #1a1a1a; border: 1px solid #333; }
.ph-speaker-top { left: 118px; top: 41px; }
.ph-speaker-bot { left: 116px; top: 752px; }
.screen { width: 350px; }
.a-status { height: 20px; background: #00574b; display: flex; align-items: center; padding-left: 15px; color: #fff; font-family: Roboto, sans-serif; font-size: 12.500px; letter-spacing: 0; }
.a-sh { margin-left: 7px; }
.a-circle { width: 12px; height: 12px; margin-left: 8px; border-radius: 50%; background: #6fa59b; }
.a-sd { margin-left: 10px; }
.a-wifi { margin-left: 164px; }
.a-sig { margin-left: 1px; }
.a-bat { margin-left: 8px; }
.a-time { margin-left: 7px; }
.a-bar { height: 48px; padding: 1px 0 0 14px; line-height: 48px; background: #008577; color: #fff; font-family: Roboto, sans-serif; font-size: 17.300px; letter-spacing: 0; font-weight: 500; box-shadow: 0 1px 3px rgba(0,0,0,.3); position: relative; }
.a-body { height: 513px; padding-top: 6px; background: #fafafa; font-family: Roboto, sans-serif; font-size: 38.300px; line-height: 44.500px; letter-spacing: 0; text-align: center; }
.a-body p { margin: 0 0 6.500px; }
.a-body .c-crimson { margin-bottom: 5.500px; }
.c-blue { color: #3311dd; }
.c-pink { color: #ff66cc; }
.c-green { color: #009933; }
.c-orange { color: #ff3300; }
.c-crimson { color: #d81b60; }
.c-teal { color: #00574b; }
.a-nav { width: 350px; height: 40px; display: flex; align-items: center; justify-content: space-between; padding: 0 73px; }
.a-sq { width: 11px; height: 11px; background: #999; }

/* emulator toolbar */
.emu { position: absolute; left: 524px; top: 100px; width: 61px; height: 511px; display: flex; flex-direction: column; border: 1px solid #111; background: #f0f0f0; box-shadow: 0 4px 16px rgba(0,0,0,.25); }
.emu-head { height: 21.500px; flex: none; display: flex; justify-content: space-between; padding: 1px 13px 0 14px; font-size: 15px; line-height: 20px; color: #76909c; }
.emu-i { height: 44px; flex: none; display: flex; align-items: center; justify-content: center; }

/* notification */
.toast { position: absolute; left: 1482px; top: 959px; width: 408px; height: 65px; display: flex; gap: 7px; padding: 10px 10px 0 10px; background: #f2f2f2; border: 1px solid #c8c8c8; border-radius: 2px; box-shadow: 0 2px 5px rgba(0,0,0,.25); }
.toast svg { margin-top: 1px; }
.toast-txt { display: flex; flex-direction: column; gap: 2px; }
.toast strong { font-weight: 700; letter-spacing: -.15px; }
.toast a { color: #1a0dff; }
```
